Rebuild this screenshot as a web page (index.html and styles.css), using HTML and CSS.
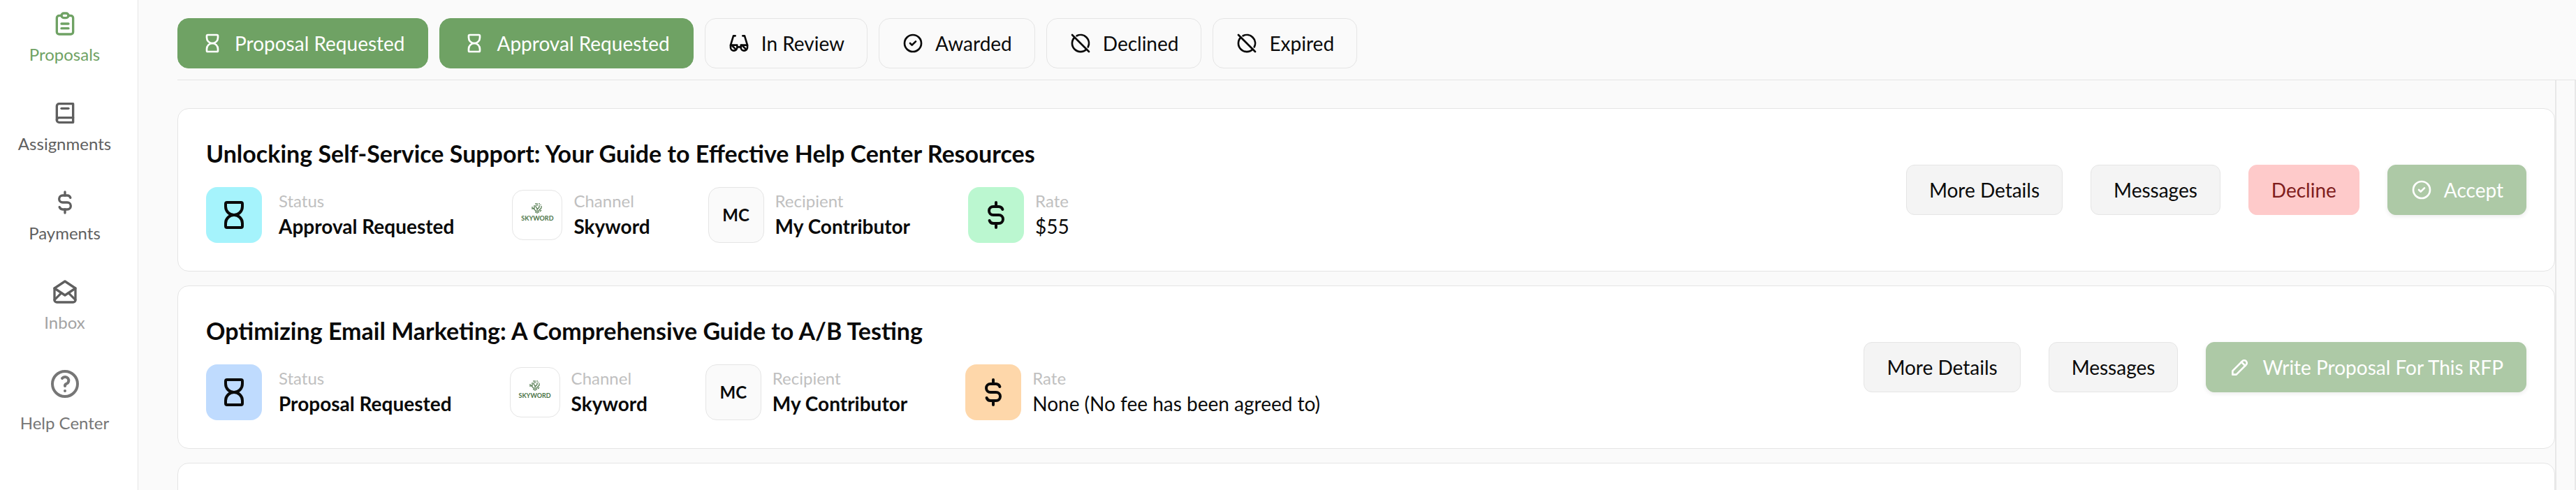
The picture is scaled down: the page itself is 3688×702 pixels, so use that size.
FILE: index.html
```html
<!DOCTYPE html>
<html lang="en">
<head>
  <meta charset="UTF-8" />
  <meta name="viewport" content="width=device-width, initial-scale=1.0" />
  <title>Proposals</title>
  <link rel="stylesheet" href="styles.css">
</head>
<body>
  <!-- Icons -->
  <svg class="icon-defs" aria-hidden="true">
    <symbol id="icon-clipboard" viewBox="0 0 24 24">
      <path d="M9 5h-2a2 2 0 0 0 -2 2v12a2 2 0 0 0 2 2h10a2 2 0 0 0 2 -2v-12a2 2 0 0 0 -2 -2h-2" />
      <path d="M11 3h2a2 2 0 0 1 0 4h-2a2 2 0 0 1 0 -4z" />
      <path d="M9 12h6M9 16h6" />
    </symbol>
    <symbol id="icon-book" viewBox="0 0 24 24">
      <path d="M19 4v16h-12a2 2 0 0 1 -2 -2v-12a2 2 0 0 1 2 -2h12z" />
      <path d="M19 16h-12a2 2 0 0 0 -2 2" />
      <path d="M9 8h6" />
    </symbol>
    <symbol id="icon-dollar" viewBox="0 0 24 24">
      <path d="M16.7 8a3 3 0 0 0 -2.7 -2h-4a3 3 0 0 0 0 6h4a3 3 0 0 1 0 6h-4a3 3 0 0 1 -2.7 -2" />
      <path d="M12 3v3m0 12v3" />
    </symbol>
    <symbol id="icon-mail" viewBox="0 0 24 24">
      <path d="M3 9l9 6l9 -6l-9 -6l-9 6" />
      <path d="M21 9v10a2 2 0 0 1 -2 2h-14a2 2 0 0 1 -2 -2v-10" />
      <path d="M3 19l6 -6M15 13l6 6" />
    </symbol>
    <symbol id="icon-help" viewBox="0 0 24 24">
      <circle cx="12" cy="12" r="9" />
      <path d="M12 17v.01" />
      <path d="M12 13.5a1.5 1.5 0 0 1 1 -1.5a2.6 2.6 0 1 0 -3 -4" />
    </symbol>
    <symbol id="icon-hourglass" viewBox="0 0 24 24">
      <path d="M6 20v-2a6 6 0 1 1 12 0v2a1 1 0 0 1 -1 1h-10a1 1 0 0 1 -1 -1z" />
      <path d="M6 4v2a6 6 0 1 0 12 0v-2a1 1 0 0 0 -1 -1h-10a1 1 0 0 0 -1 1z" />
    </symbol>
    <symbol id="icon-glasses" viewBox="0 0 24 24">
      <path d="M8 4h-2l-3 10M16 4h2l3 10M10 16h4" />
      <path d="M21 16.5a3.5 3.5 0 0 1 -7 0v-2.500h7v2.500" />
      <path d="M10 16.5a3.5 3.5 0 0 1 -7 0v-2.500h7v2.500" />
      <path d="M4 14l4.500 4.500M15 14l4.500 4.500" />
    </symbol>
    <symbol id="icon-check" viewBox="0 0 24 24">
      <circle cx="12" cy="12" r="9" />
      <path d="M9 12l2 2l4 -4" />
    </symbol>
    <symbol id="icon-off" viewBox="0 0 24 24">
      <path d="M20.042 16.045a9 9 0 0 0 -12.087 -12.087m-2.318 1.677a9 9 0 1 0 12.725 12.73" />
      <path d="M3 3l18 18" />
    </symbol>
    <symbol id="icon-pencil" viewBox="0 0 24 24">
      <path d="M4 20h4l10.500 -10.500a1.500 1.500 0 0 0 -4 -4l-10.500 10.500v4" />
      <path d="M13.500 6.500l4 4" />
    </symbol>
    <symbol id="logo-tree" viewBox="0 0 16 16">
      <path d="M8 16v-7l-2 -3v-2M8 10l3 -3v-3M6 15v-3l-4 -4M10 15v-3l4 -4v-3M4 9v-5M8 5v-4M6 3v-2M11 3v-2M12 13l2 -2M1 6v4M13 4v-1" />
    </symbol>
  </svg>

  <div class="layout">
    <!-- Sidebar -->
    <nav class="sidebar">
      <a href="#" class="nav-item active">
        <svg class="icon"><use href="#icon-clipboard" /></svg>
        <span>Proposals</span>
      </a>
      <a href="#" class="nav-item">
        <svg class="icon"><use href="#icon-book" /></svg>
        <span>Assignments</span>
      </a>
      <a href="#" class="nav-item">
        <svg class="icon"><use href="#icon-dollar" /></svg>
        <span>Payments</span>
      </a>
      <a href="#" class="nav-item inbox">
        <svg class="icon"><use href="#icon-mail" /></svg>
        <span>Inbox</span>
      </a>
      <a href="#" class="nav-item help">
        <svg class="icon"><use href="#icon-help" /></svg>
        <span>Help Center</span>
      </a>
    </nav>

    <!-- Main Content -->
    <main class="main">
      <div class="filters">
        <button class="chip selected"><svg class="icon"><use href="#icon-hourglass" /></svg>Proposal Requested</button>
        <button class="chip selected"><svg class="icon"><use href="#icon-hourglass" /></svg>Approval Requested</button>
        <button class="chip"><svg class="icon"><use href="#icon-glasses" /></svg>In Review</button>
        <button class="chip"><svg class="icon"><use href="#icon-check" /></svg>Awarded</button>
        <button class="chip"><svg class="icon"><use href="#icon-off" /></svg>Declined</button>
        <button class="chip"><svg class="icon"><use href="#icon-off" /></svg>Expired</button>
      </div>

      <div class="content">
        <div class="list">
          <article class="card">
            <div class="card-info">
              <h2>Unlocking Self-Service Support: Your Guide to Effective Help Center Resources</h2>
              <div class="details">
                <div class="detail status">
                  <div class="tile cyan"><svg class="icon"><use href="#icon-hourglass" /></svg></div>
                  <div>
                    <div class="label">Status</div>
                    <div class="value">Approval Requested</div>
                  </div>
                </div>
                <div class="detail">
                  <div class="tile logo"><svg class="tree"><use href="#logo-tree" /></svg><span>SKYWORD</span></div>
                  <div>
                    <div class="label">Channel</div>
                    <div class="value">Skyword</div>
                  </div>
                </div>
                <div class="detail">
                  <div class="tile initials">MC</div>
                  <div>
                    <div class="label">Recipient</div>
                    <div class="value">My Contributor</div>
                  </div>
                </div>
                <div class="detail">
                  <div class="tile green"><svg class="icon"><use href="#icon-dollar" /></svg></div>
                  <div>
                    <div class="label">Rate</div>
                    <div class="value rate">$55</div>
                  </div>
                </div>
              </div>
            </div>
            <div class="actions">
              <button class="btn">More Details</button>
              <button class="btn">Messages</button>
              <button class="btn btn-decline">Decline</button>
              <button class="btn btn-primary"><svg class="icon"><use href="#icon-check" /></svg>Accept</button>
            </div>
          </article>

          <article class="card">
            <div class="card-info">
              <h2>Optimizing Email Marketing: A Comprehensive Guide to A/B Testing</h2>
              <div class="details">
                <div class="detail status">
                  <div class="tile blue"><svg class="icon"><use href="#icon-hourglass" /></svg></div>
                  <div>
                    <div class="label">Status</div>
                    <div class="value">Proposal Requested</div>
                  </div>
                </div>
                <div class="detail">
                  <div class="tile logo"><svg class="tree"><use href="#logo-tree" /></svg><span>SKYWORD</span></div>
                  <div>
                    <div class="label">Channel</div>
                    <div class="value">Skyword</div>
                  </div>
                </div>
                <div class="detail">
                  <div class="tile initials">MC</div>
                  <div>
                    <div class="label">Recipient</div>
                    <div class="value">My Contributor</div>
                  </div>
                </div>
                <div class="detail">
                  <div class="tile orange"><svg class="icon"><use href="#icon-dollar" /></svg></div>
                  <div>
                    <div class="label">Rate</div>
                    <div class="value rate">None (No fee has been agreed to)</div>
                  </div>
                </div>
              </div>
            </div>
            <div class="actions">
              <button class="btn">More Details</button>
              <button class="btn">Messages</button>
              <button class="btn btn-primary"><svg class="icon"><use href="#icon-pencil" /></svg>Write Proposal For This RFP</button>
            </div>
          </article>

          <article class="card"></article>
        </div>
        <div class="scroll-track"></div>
      </div>
    </main>
  </div>
</body>
</html>
```
FILE: styles.css
```css
:root {
  --bg-color: #fafafa;
  --card-bg: #fff;
  --text-color: #0a0a0a;
  --border: #e5e5e5;
  --green: #6fa264;
  --green-muted: #adc9a6;
  --nav-color: #5f5f5f;
  --label-color: #c0c0c0;
}

* {
  box-sizing: border-box;
}

body {
  margin: 0;
  font-family: Lato, sans-serif;
  font-size: 28px;
  line-height: 40px;
  background-color: var(--bg-color);
  color: var(--text-color);
}

.icon-defs {
  display: none;
}

.icon {
  width: 32px;
  height: 32px;
  flex-shrink: 0;
  fill: none;
  stroke: currentColor;
  stroke-width: 2;
  stroke-linecap: round;
  stroke-linejoin: round;
}

.layout {
  display: flex;
  height: 100vh;
  overflow: hidden;
}

/* Sidebar */
.sidebar {
  width: 198px;
  flex-shrink: 0;
  display: flex;
  flex-direction: column;
  gap: 48px;
  padding: 14px 12px 0 0;
  background-color: var(--card-bg);
  border-right: 1px solid var(--border);
}

.nav-item {
  display: flex;
  flex-direction: column;
  align-items: center;
  gap: 8px;
  color: var(--nav-color);
  font-size: 24px;
  line-height: 32px;
  text-decoration: none;
}

.nav-item .icon {
  width: 40px;
  height: 40px;
}

.nav-item.active {
  color: var(--green);
}

.nav-item.inbox span {
  color: #a3a3a3;
}

.nav-item.help {
  gap: 16px;
  color: #767676;
}

.nav-item.help .icon {
  width: 48px;
  height: 48px;
}

/* Main content */
.main {
  flex: 1;
  min-width: 0;
  display: flex;
  flex-direction: column;
  padding-left: 56px;
}

.filters {
  display: flex;
  gap: 16px;
  padding: 26px 0 16px;
  border-bottom: 1px solid var(--border);
}

.chip,
.btn {
  display: flex;
  align-items: center;
  gap: 16px;
  height: 72px;
  padding: 0 32px;
  border: 1px solid var(--border);
  background-color: var(--bg-color);
  color: var(--text-color);
  font: inherit;
  white-space: nowrap;
  cursor: pointer;
}

.chip {
  border-radius: 16px;
}

.chip.selected {
  padding: 0 33px;
  border-color: var(--green);
  background-color: var(--green);
  color: #fff;
}

.content {
  flex: 1;
  min-height: 0;
  display: flex;
}

.list {
  flex: 1;
  display: flex;
  flex-direction: column;
  gap: 20px;
  padding-top: 40px;
}

.scroll-track {
  width: 30px;
  border: 2px solid #e8e8e8;
  border-width: 0 2px;
}

/* Proposal cards */
.card {
  display: flex;
  align-items: center;
  justify-content: space-between;
  flex-shrink: 0;
  min-height: 234px;
  padding: 40px;
  border: 1px solid var(--border);
  border-radius: 16px;
  background-color: var(--card-bg);
}

.card h2 {
  margin: 0 0 24px;
  font-size: 34px;
  line-height: 48px;
  font-weight: 700;
}

.details {
  display: flex;
  gap: 83px;
}

.detail {
  display: flex;
  align-items: center;
  gap: 16px;
}

.detail.status {
  gap: 24px;
}

.tile {
  display: flex;
  align-items: center;
  justify-content: center;
  width: 80px;
  height: 80px;
  border-radius: 16px;
}

.tile .icon {
  width: 48px;
  height: 48px;
}

.tile.cyan {
  background-color: #a5f3fc;
}

.tile.blue {
  background-color: #bfdbfe;
}

.tile.green {
  background-color: #bbf7d0;
}

.tile.orange {
  background-color: #fed7aa;
}

.tile.initials {
  border: 1px solid var(--border);
  background-color: var(--bg-color);
  font-size: 24px;
  font-weight: 700;
}

.tile.logo {
  flex-direction: column;
  gap: 2px;
  width: 72px;
  height: 72px;
  padding-bottom: 8px;
  border: 1px solid var(--border);
  color: #4a7346;
  font-size: 9px;
  line-height: 10px;
  font-weight: 700;
}

.tree {
  width: 16px;
  height: 16px;
  fill: none;
  stroke: currentColor;
  stroke-width: 1.2;
}

.label {
  color: var(--label-color);
  font-size: 24px;
  line-height: 32px;
}

.value {
  font-weight: 700;
}

.value.rate {
  font-weight: 400;
}

.actions {
  display: flex;
  gap: 40px;
}

.btn {
  border-radius: 12px;
  background-color: #f4f4f4;
}

.btn-decline {
  border-color: #fecaca;
  background-color: #fecaca;
  color: #7f1d1d;
}

.btn-primary {
  border-color: var(--green-muted);
  background-color: var(--green-muted);
  color: #fff;
  box-shadow: 0 2px 6px rgba(0, 0, 0, 0.08);
}
```
